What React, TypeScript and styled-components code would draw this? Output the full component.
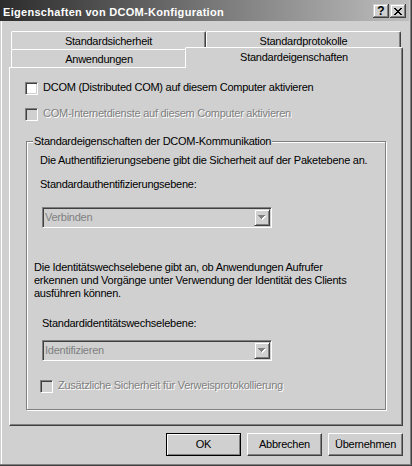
import React from 'react';
import styled, { createGlobalStyle, css } from 'styled-components';

const FACE = '#d0d0d0';
const SHADOW = '#808080';
const DARK = '#404040';
const HI = '#ffffff';

const GlobalStyle = createGlobalStyle`
  html, body { margin: 0; padding: 0; background: ${FACE}; }
  body {
    font-family: "Liberation Sans", Arial, sans-serif;
    font-size: 11px;
    line-height: 13px;
  }
`;

const Window = styled.div`
  box-sizing: border-box;
  width: 412px;
  height: 466px;
  background: ${FACE};
  border-right: 1px solid ${DARK};
  border-bottom: 1px solid ${DARK};
  box-shadow: inset -1px -1px 0 ${SHADOW}, inset 1px 0 0 ${FACE}, inset 2px 0 0 ${HI};
  display: flex;
  flex-direction: column;
  color: #000;
  letter-spacing: -0.25px;
`;

const TitleBar = styled.div`
  box-sizing: border-box;
  flex: none;
  width: 409px;
  height: 21px;
  padding: 0 3px;
  display: flex;
  align-items: flex-start;
  background: linear-gradient(to right, #2c2c2c, #bebebe);
`;

const TitleText = styled.div`
  flex: 1;
  margin-top: 6px;
  color: #fff;
  font-weight: bold;
  letter-spacing: 0.3px;
  white-space: nowrap;
`;

const CaptionButtons = styled.div`
  display: flex;
  gap: 1px;
  margin-top: 4px;
`;

const CaptionButton = styled.div`
  box-sizing: border-box;
  width: 16px;
  height: 14px;
  background: ${FACE};
  box-shadow: inset -1px -1px 0 ${DARK}, inset 1px 1px 0 ${FACE}, inset -2px -2px 0 ${SHADOW},
    inset 2px 2px 0 ${HI};
  display: flex;
  align-items: center;
  justify-content: center;
  font-weight: bold;
  font-size: 12px;
  line-height: 12px;
  letter-spacing: 0;
`;

const Body = styled.div`
  flex: 1;
  display: flex;
  flex-direction: column;
  padding: 10px 8px 0 9px;
`;

const TabRow = styled.div`
  display: flex;
  align-items: flex-end;
  height: 18px;
  padding-left: 2px;
`;

const Tab = styled.div<{ $w: number; $selected?: boolean }>`
  box-sizing: border-box;
  flex: none;
  width: ${(p) => p.$w}px;
  height: 18px;
  padding-top: 3px;
  text-align: center;
  white-space: nowrap;
  background: ${FACE};
  border-top: 1px solid ${HI};
  border-left: 1px solid ${HI};
  border-right: 1px solid ${DARK};
  border-radius: 2px 2px 0 0;
  box-shadow: inset -1px 0 0 ${SHADOW};
  ${(p) =>
    p.$selected &&
    css`
      position: relative;
      z-index: 1;
      height: 21px;
      margin: -2px 0 -1px -2px;
    `}
`;

const Panel = styled.div`
  box-sizing: border-box;
  height: 359px;
  border: 1px solid;
  border-color: ${HI} ${DARK} ${DARK} ${HI};
  box-shadow: inset -1px -1px 0 ${SHADOW};
  padding-top: 13px;
`;

const CheckRow = styled.div<{ $indent: number; $gap: number }>`
  display: flex;
  align-items: flex-start;
  margin: ${(p) => p.$gap}px 0 0 ${(p) => p.$indent}px;
`;

const CheckBox = styled.span<{ $disabled?: boolean }>`
  box-sizing: border-box;
  flex: none;
  width: 13px;
  height: 13px;
  margin: 1px 5px 0 0;
  background: ${(p) => (p.$disabled ? FACE : '#fff')};
  border: 1px solid;
  border-color: ${SHADOW} ${HI} ${HI} ${SHADOW};
  box-shadow: inset 1px 1px 0 ${DARK}, inset -1px -1px 0 ${FACE};
`;

const Label = styled.span<{ $disabled?: boolean }>`
  white-space: nowrap;
  ${(p) =>
    p.$disabled &&
    css`
      color: ${SHADOW};
      text-shadow: 1px 1px 0 ${HI};
    `}
`;

const GroupBox = styled.fieldset`
  box-sizing: border-box;
  width: 360px;
  margin: 15px 0 0 16px;
  padding: 0 0 16px 0;
  min-width: 0;
  border: 1px solid ${SHADOW};
  box-shadow: inset 1px 1px 0 ${HI}, 1px 1px 0 ${HI};
`;

const GroupTitle = styled.legend`
  margin-left: 6px;
  padding: 0 1px;
  line-height: 11px;
  background: ${FACE};
  white-space: nowrap;
`;

const Paragraph = styled.div<{ $indent: number; $gap: number }>`
  margin: ${(p) => p.$gap}px 0 0 ${(p) => p.$indent}px;
  white-space: nowrap;
`;

const Combo = styled.div<{ $gap: number }>`
  box-sizing: border-box;
  width: 230px;
  height: 21px;
  margin: ${(p) => p.$gap}px 0 0 15px;
  padding: 1px;
  display: flex;
  background: ${FACE};
  border: 1px solid;
  border-color: ${SHADOW} ${HI} ${HI} ${SHADOW};
  box-shadow: inset 1px 1px 0 ${DARK}, inset -1px -1px 0 ${FACE};
`;

const ComboValue = styled.div`
  flex: 1;
  padding-left: 1px;
  line-height: 17px;
  color: ${SHADOW};
  white-space: nowrap;
`;

const ComboButton = styled.div`
  box-sizing: border-box;
  flex: none;
  width: 16px;
  height: 17px;
  border: 1px solid;
  border-color: ${FACE} ${DARK} ${DARK} ${FACE};
  box-shadow: inset 1px 1px 0 ${HI}, inset -1px -1px 0 ${SHADOW};
  display: flex;
  align-items: center;
  justify-content: center;
  padding-bottom: 1px;
`;

const ButtonRow = styled.div`
  display: flex;
  justify-content: flex-end;
  gap: 6px;
  margin-top: 7px;
`;

const Button = styled.button<{ $default?: boolean }>`
  box-sizing: border-box;
  width: 75px;
  height: 23px;
  padding: 0;
  font: inherit;
  letter-spacing: inherit;
  line-height: 13px;
  color: #000;
  background: ${FACE};
  border: 1px solid;
  border-color: ${HI} ${DARK} ${DARK} ${HI};
  box-shadow: inset -1px -1px 0 ${SHADOW};
  ${(p) =>
    p.$default &&
    css`
      border-color: #000;
      box-shadow: inset 1px 1px 0 ${HI}, inset -1px -1px 0 ${SHADOW};
    `}
`;

const CloseGlyph = () => (
  <svg width="8" height="7" viewBox="0 0 8 7" shapeRendering="crispEdges">
    <path
      fill="#000"
      d="M0 0h2v1H0zM6 0h2v1H6zM1 1h2v1H1zM5 1h2v1H5zM2 2h4v1H2zM3 3h2v1H3zM2 4h4v1H2zM1 5h2v1H1zM5 5h2v1H5zM0 6h2v1H0zM6 6h2v1H6z"
    />
  </svg>
);

const DisabledArrow = () => (
  <svg width="8" height="5" viewBox="0 0 8 5" shapeRendering="crispEdges">
    <path fill={HI} d="M1 1h7v1H1zM2 2h5v1H2zM3 3h3v1H3zM4 4h1v1H4z" />
    <path fill={SHADOW} d="M0 0h7v1H0zM1 1h5v1H1zM2 2h3v1H2zM3 3h1v1H3z" />
  </svg>
);

export default function App() {
  return (
    <>
      <GlobalStyle />
      <Window>
        <TitleBar>
          <TitleText>Eigenschaften von DCOM-Konfiguration</TitleText>
          <CaptionButtons>
            <CaptionButton>?</CaptionButton>
            <CaptionButton>
              <CloseGlyph />
            </CaptionButton>
          </CaptionButtons>
        </TitleBar>
        <Body>
          <TabRow>
            <Tab $w={195}>Standardsicherheit</Tab>
            <Tab $w={195}>Standardprotokolle</Tab>
          </TabRow>
          <TabRow>
            <Tab $w={176}>Anwendungen</Tab>
            <Tab $w={218} $selected>
              Standardeigenschaften
            </Tab>
          </TabRow>
          <Panel>
            <CheckRow $indent={15} $gap={0}>
              <CheckBox />
              <Label>DCOM (Distributed COM) auf diesem Computer aktivieren</Label>
            </CheckRow>
            <CheckRow $indent={15} $gap={12}>
              <CheckBox $disabled />
              <Label $disabled>COM-Internetdienste auf diesem Computer aktivieren</Label>
            </CheckRow>
            <GroupBox>
              <GroupTitle>Standardeigenschaften der DCOM-Kommunikation</GroupTitle>
              <Paragraph $indent={13} $gap={7}>
                Die Authentifizierungsebene gibt die Sicherheit auf der Paketebene an.
              </Paragraph>
              <Paragraph $indent={13} $gap={11}>
                Standardauthentifizierungsebene:
              </Paragraph>
              <Combo $gap={16}>
                <ComboValue>Verbinden</ComboValue>
                <ComboButton>
                  <DisabledArrow />
                </ComboButton>
              </Combo>
              <Paragraph $indent={7} $gap={33}>
                Die Identitätswechselebene gibt an, ob Anwendungen Aufrufer
                <br />
                erkennen und Vorgänge unter Verwendung der Identität des Clients
                <br />
                ausführen können.
              </Paragraph>
              <Paragraph $indent={15} $gap={17}>
                Standardidentitätswechselebene:
              </Paragraph>
              <Combo $gap={10}>
                <ComboValue>Identifizieren</ComboValue>
                <ComboButton>
                  <DisabledArrow />
                </ComboButton>
              </Combo>
              <CheckRow $indent={13} $gap={18}>
                <CheckBox $disabled />
                <Label $disabled>Zusätzliche Sicherheit für Verweisprotokollierung</Label>
              </CheckRow>
            </GroupBox>
          </Panel>
          <ButtonRow>
            <Button $default>OK</Button>
            <Button>Abbrechen</Button>
            <Button>Übernehmen</Button>
          </ButtonRow>
        </Body>
      </Window>
    </>
  );
}
